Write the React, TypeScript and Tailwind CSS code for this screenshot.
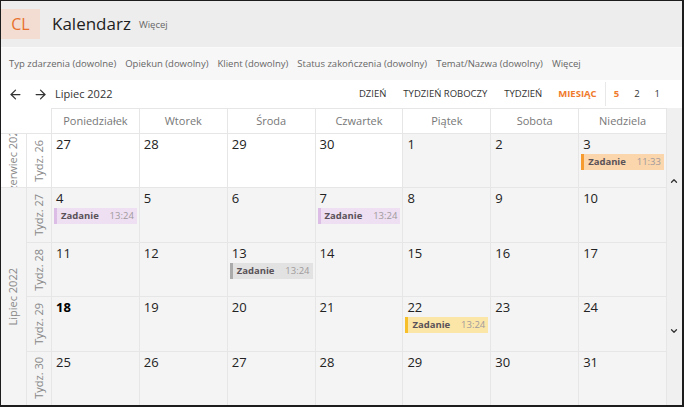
import React from 'react';
import { ArrowLeft, ArrowRight, ChevronUp, ChevronDown } from 'lucide-react';

type Ev = { time: string; bg: string; bar: string };

const events: Record<string, Ev> = {
  'r0-6': { time: '11:33', bg: 'bg-[#fbd5ab]', bar: 'bg-[#f59b30]' },
  'r1-0': { time: '13:24', bg: 'bg-[#eedff2]', bar: 'bg-[#dbbde6]' },
  'r1-3': { time: '13:24', bg: 'bg-[#eedff2]', bar: 'bg-[#dbbde6]' },
  'r2-2': { time: '13:24', bg: 'bg-[#e2e2e2]', bar: 'bg-[#ababab]' },
  'r3-4': { time: '13:24', bg: 'bg-[#fbe6a8]', bar: 'bg-[#f7c02a]' },
};

const weeks = [
  [27, 28, 29, 30, 1, 2, 3],
  [4, 5, 6, 7, 8, 9, 10],
  [11, 12, 13, 14, 15, 16, 17],
  [18, 19, 20, 21, 22, 23, 24],
  [25, 26, 27, 28, 29, 30, 31],
];

const dayNames = ['Poniedziałek', 'Wtorek', 'Środa', 'Czwartek', 'Piątek', 'Sobota', 'Niedziela'];
const filters = ['Typ zdarzenia (dowolne)', 'Opiekun (dowolny)', 'Klient (dowolny)', 'Status zakończenia (dowolny)', 'Temat/Nazwa (dowolny)', 'Więcej'];

function EventChip({ ev }: { ev: Ev }) {
  return (
    <div className={`mx-[2px] mt-[1px] flex h-[16px] items-center ${ev.bg}`}>
      <div className={`h-full w-[3px] ${ev.bar}`} />
      <span className="ml-[4px] text-[9.5px] font-bold text-[#5a5258]">Zadanie</span>
      <span className="ml-auto mr-[3px] text-[9.5px] text-[#a09a9c]">{ev.time}</span>
    </div>
  );
}

export default function App() {
  return (
    <div
      className="flex h-[407px] w-[684px] flex-col overflow-hidden border-b-2 border-l border-r-2 border-t border-[#1c1c1c] bg-white text-[#222]"
      style={{ fontFamily: '"Open Sans", "Noto Sans", sans-serif' }}
    >
      {/* Top bar */}
      <div className="flex h-[46px] shrink-0 items-center bg-[#ededed]">
        <div className="flex h-[30px] w-[39px] items-center justify-center bg-[#f3ddd2] text-[16px] text-[#e8702c]">CL</div>
        <span className="ml-[12px] text-[17px] text-[#1e1e1e]">Kalendarz</span>
        <span className="ml-[8px] mt-[3px] text-[9.5px] text-[#666]">Więcej</span>
      </div>
      <div className="h-px shrink-0 bg-[#fafafa]" />

      {/* Filters */}
      <div className="flex h-[32px] shrink-0 items-center gap-[9px] bg-[#f7f7f7] pl-[8px] text-[9.5px] text-[#666]">
        {filters.map(f => (
          <span key={f}>{f}</span>
        ))}
      </div>

      {/* Toolbar */}
      <div className="flex h-[28px] shrink-0 items-center">
        <ArrowLeft className="ml-[7px] h-[15px] w-[15px] text-[#333]" strokeWidth={2} />
        <ArrowRight className="ml-[10px] h-[15px] w-[15px] text-[#333]" strokeWidth={2} />
        <span className="ml-[7px] text-[11px] text-[#333]">Lipiec 2022</span>
        <div className="ml-auto flex h-full items-center text-[9.5px] text-[#333]">
          <span className="mr-[17px]">DZIEŃ</span>
          <span className="mr-[17px]">TYDZIEŃ ROBOCZY</span>
          <span className="mr-[16px]">TYDZIEŃ</span>
          <span className="mr-[8px] font-bold text-[#f07a2c]">MIESIĄC</span>
          <div className="h-[24px] w-px bg-[#e8e8e8]" />
          <span className="ml-[8px] font-bold text-[#f07a2c]">5</span>
          <span className="ml-[15px]">2</span>
          <span className="ml-[15px] mr-[22px]">1</span>
        </div>
      </div>

      {/* Calendar grid */}
      <div className="grid min-h-0 flex-1 grid-cols-[25px_25px_repeat(7,1fr)_16px] grid-rows-[25px_repeat(5,1fr)]">
        <div className="col-span-2" />
        {dayNames.map(d => (
          <div key={d} className="flex items-center justify-center border-l border-t border-[#e6e6e6] text-[11px] text-[#777]">
            {d}
          </div>
        ))}
        <div className="row-span-6 flex flex-col items-center justify-between border-l border-[#e6e6e6] bg-[#f0f0f0] pb-[69px] pt-[68px]">
          <ChevronUp className="h-[10px] w-[10px] text-[#333]" strokeWidth={3} />
          <ChevronDown className="h-[10px] w-[10px] text-[#333]" strokeWidth={3} />
        </div>

        {weeks.map((week, r) => (
          <React.Fragment key={r}>
            {r === 0 && (
              <div className="flex items-center justify-center overflow-hidden border-t border-[#e6e6e6] bg-white">
                <span className="rotate-180 whitespace-nowrap text-[11px] text-[#888] [writing-mode:vertical-rl]">Czerwiec 2022</span>
              </div>
            )}
            {r === 1 && (
              <div className="row-span-4 flex items-center justify-center overflow-hidden border-t border-[#e6e6e6] bg-[#f4f4f4]">
                <span className="rotate-180 whitespace-nowrap text-[11px] text-[#888] [writing-mode:vertical-rl]">Lipiec 2022</span>
              </div>
            )}
            <div className={`flex items-center justify-center overflow-hidden border-l border-t border-[#e6e6e6] ${r === 0 ? 'bg-white' : 'bg-[#f4f4f4]'}`}>
              <span className="rotate-180 whitespace-nowrap text-[11px] text-[#888] [writing-mode:vertical-rl]">Tydz. {26 + r}</span>
            </div>
            {week.map((day, c) => {
              const ev = events[`r${r}-${c}`];
              const other = r === 0 && c < 4;
              return (
                <div key={c} className={`border-l border-t border-[#e6e6e6] ${other ? 'bg-white' : 'bg-[#f4f4f4]'}`}>
                  <div className={`pl-[4px] pt-[2px] text-[13px] leading-[17px] ${day === 18 && r === 3 ? 'font-bold text-black' : 'text-[#222]'}`}>{day}</div>
                  {ev && <EventChip ev={ev} />}
                </div>
              );
            })}
          </React.Fragment>
        ))}
      </div>
    </div>
  );
}
